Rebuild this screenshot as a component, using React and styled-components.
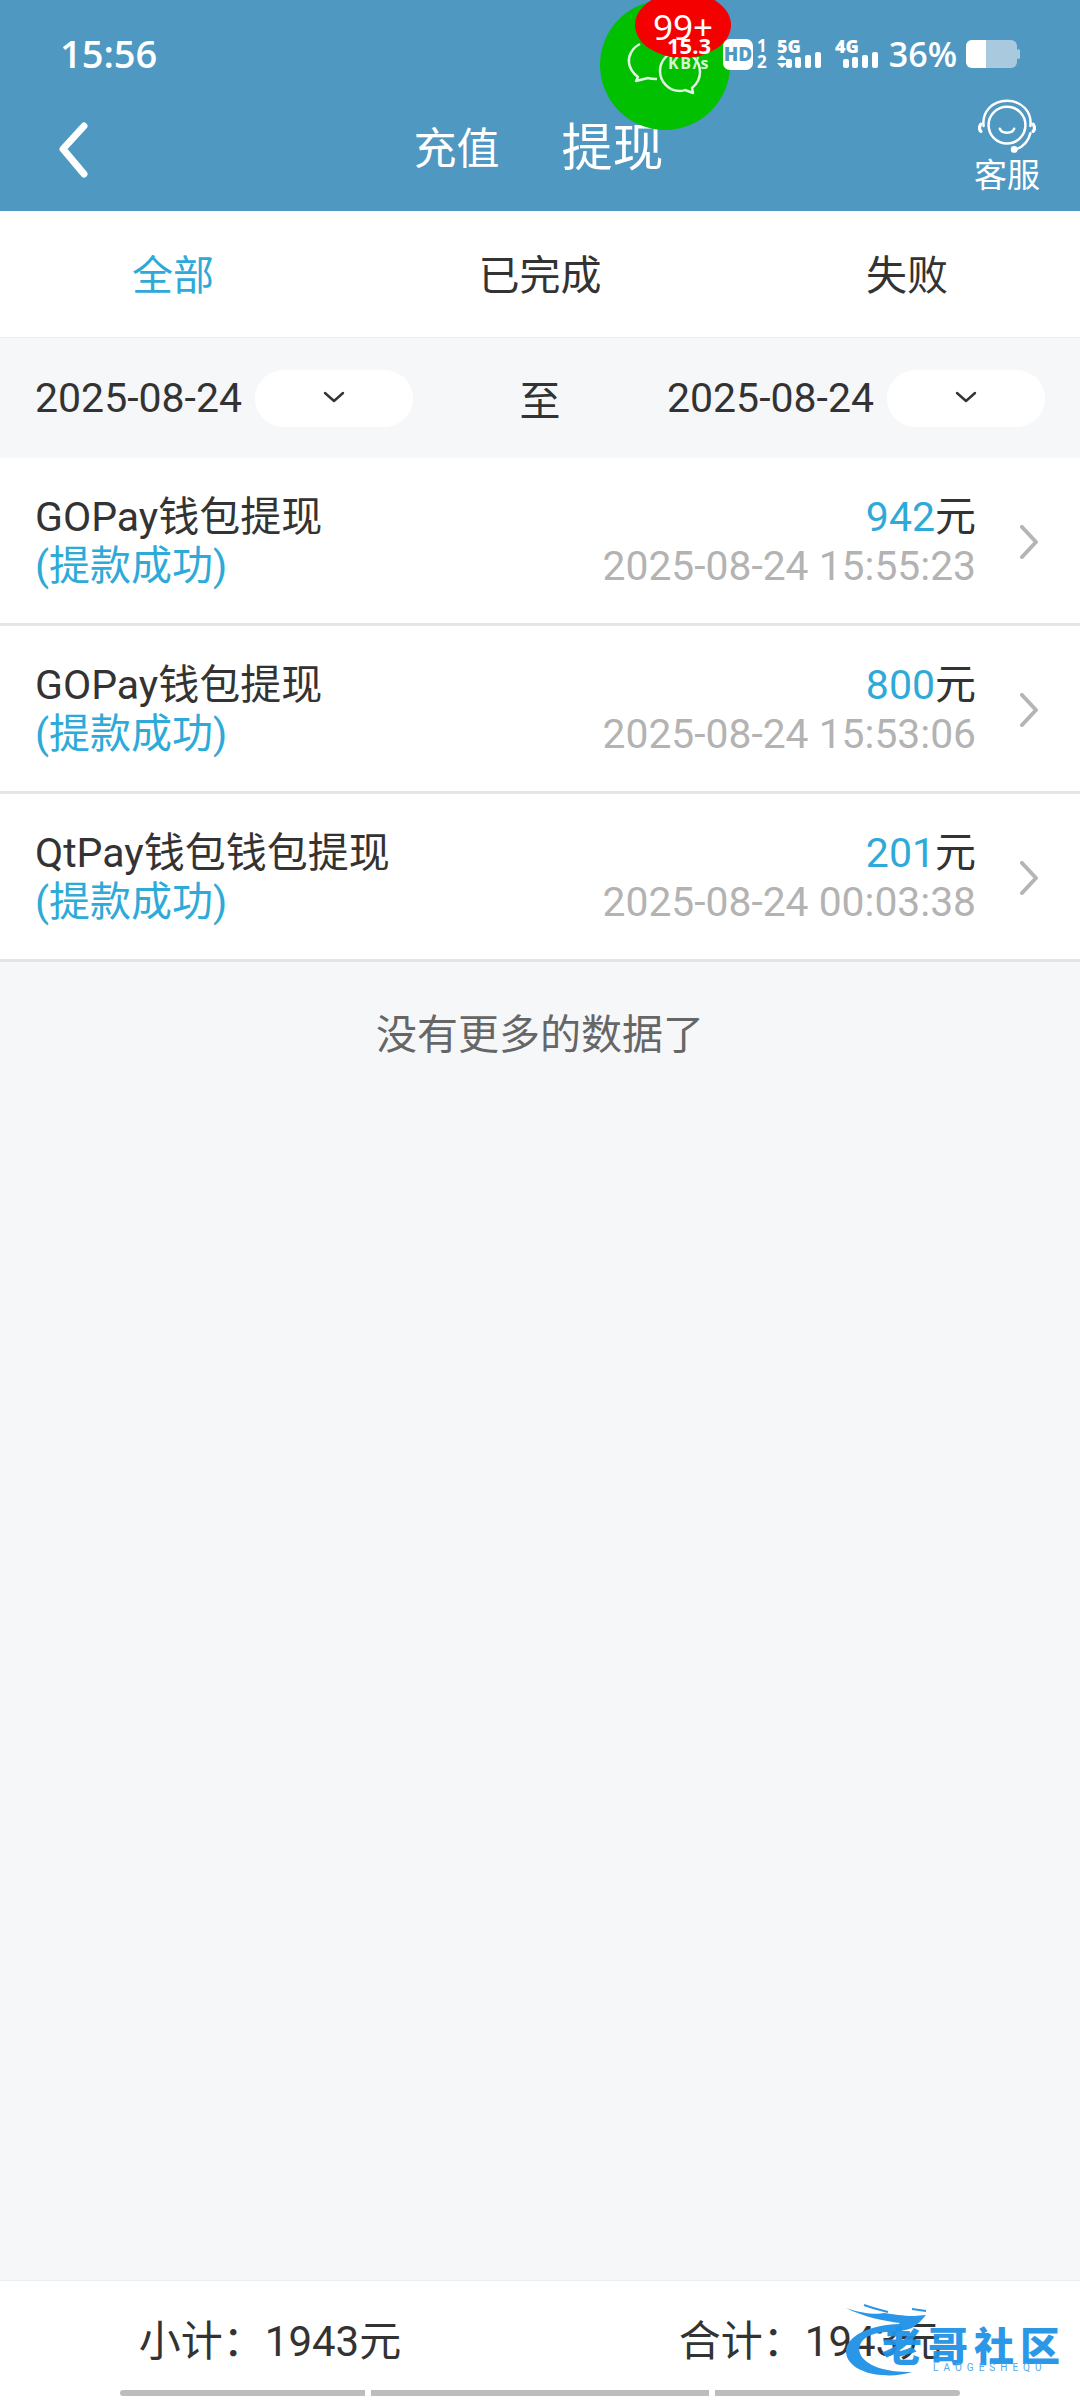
import React from "react";
import styled, { createGlobalStyle } from "styled-components";

const GlobalStyle = createGlobalStyle`
	html, body {
		margin: 0;
		padding: 0;
		background: #f6f7f9;
		font-family: Roboto, "Noto Sans CJK SC", sans-serif;
	}
`;

const Page = styled.div`
	position: relative;
	width: 1080px;
	height: 2400px;
	overflow: hidden;
	display: flex;
	flex-direction: column;
	background: #f6f7f9;
	color: #333;
	font-size: 41px;
`;

const Header = styled.header`
	height: 211px;
	flex: none;
	background: #4f98c1;
	color: #fff;
	display: flex;
	flex-direction: column;
`;

const StatusBar = styled.div`
	height: 107px;
	box-sizing: border-box;
	padding: 0 60px 0 60px;
	display: flex;
	justify-content: space-between;
	align-items: flex-start;
`;

const Clock = styled.span`
	margin-top: 29px;
	font-family: "Open Sans", sans-serif;
	font-size: 38px;
	font-weight: 600;
	line-height: 48px;
`;

// the status icons are drawn above the floating bubble
const StatusIcons = styled.div`
	position: relative;
	z-index: 2;
	display: flex;
	align-items: center;
	height: 36px;
	margin-top: 36px;
`;

const HdBadge = styled.span`
	width: 30px;
	height: 31px;
	border-radius: 7px;
	background: #fff;
	color: #4f98c1;
	font-family: "Open Sans", sans-serif;
	font-size: 19px;
	font-weight: 800;
	line-height: 31px;
	text-align: center;
`;

const SimSlots = styled.span`
	margin-left: 4px;
	display: flex;
	flex-direction: column;
	font-family: "Open Sans", sans-serif;
	font-size: 17px;
	font-weight: 700;
	line-height: 16px;
`;

const SignalIcon = styled.svg`
	margin-left: ${(props) => props.$gap}px;
	overflow: visible;
`;

const Percent = styled.span`
	margin: 0 9px 0 11px;
	font-family: "Open Sans", sans-serif;
	font-size: 34px;
	font-weight: 600;
	line-height: 36px;
`;

const NavBar = styled.nav`
	flex: 1;
	display: grid;
	grid-template-columns: 1fr auto 1fr;
	align-items: center;
	padding: 0 40px 0 59px;
`;

const BackLink = styled.a`
	display: flex;
	margin-top: -19px;
`;

const NavTabs = styled.div`
	display: flex;
	align-items: center;
	gap: 62px;
	margin: -20px 0 0 -22px;
`;

const NavTab = styled.span`
	font-size: ${(props) => (props.$active ? "51px" : "43px")};
	line-height: 60px;
`;

const Service = styled.div`
	justify-self: end;
	display: flex;
	flex-direction: column;
	align-items: center;
	gap: 3px;
	margin-top: -23px;
	font-size: 33px;
	line-height: 40px;
`;

const Tabs = styled.div`
	height: 127px;
	flex: none;
	box-sizing: border-box;
	padding-bottom: 5px;
	background: #fff;
	border-bottom: 1px solid #ececec;
	display: grid;
	grid-template-columns: repeat(3, 367px);
	justify-content: center;
	align-items: center;
	text-align: center;
`;

const Tab = styled.span`
	color: ${(props) => (props.$active ? "#2eaad8" : "#333")};
`;

const Filter = styled.div`
	height: 120px;
	flex: none;
	box-sizing: border-box;
	padding: 0 35px;
	display: flex;
	align-items: center;
	justify-content: space-between;
`;

const DateField = styled.div`
	display: flex;
	align-items: center;
	gap: 13px;
`;

const Pill = styled.div`
	width: 158px;
	height: 57px;
	margin-top: 1px;
	border-radius: 29px;
	background: #fff;
	display: flex;
	align-items: center;
	justify-content: center;
	padding-bottom: 4px;
	box-sizing: border-box;
`;

const List = styled.div`
	background: #fff;
	flex: none;
`;

const Row = styled.div`
	height: 168px;
	box-sizing: border-box;
	padding: 3px 36px 0 35px;
	border-bottom: 3px solid #e4e5e7;
	display: flex;
	align-items: center;
	justify-content: space-between;
	line-height: 49px;
`;

const RowLeft = styled.div`
	display: flex;
	flex-direction: column;
`;

const Status = styled.span`
	color: #2eaad8;
`;

const RowRight = styled.div`
	display: flex;
	align-items: center;
	gap: 44px;
`;

const Amounts = styled.div`
	display: flex;
	flex-direction: column;
	align-items: flex-end;
`;

const Money = styled.span`
	color: #2eaad8;
`;

const Time = styled.span`
	color: #b3b3b3;
	font-size: 40.8px;
`;

const NoMore = styled.div`
	margin-top: 45px;
	line-height: 56px;
	text-align: center;
	color: #666;
`;

const Footer = styled.footer`
	margin-top: auto;
	height: 120px;
	flex: none;
	box-sizing: border-box;
	background: #fff;
	border-top: 1px solid #ececec;
	display: flex;
	flex-direction: column;
`;

const Totals = styled.div`
	flex: 1;
	display: flex;
	align-items: center;
	text-align: center;
	font-size: 42px;
	padding-top: 3px;
`;

const Total = styled.span`
	flex: 1;
`;

const HomeBars = styled.div`
	display: flex;
	justify-content: center;
	gap: 6px;
	height: 6px;
	margin-bottom: 4px;
`;

const HomeBar = styled.span`
	width: ${(props) => props.$width}px;
	background: #bdbdbd;
	border-radius: ${(props) => props.$radius || "0"};
`;

// floating message bubble that sits over the status bar
const Bubble = styled.div`
	position: absolute;
	left: 600px;
	top: 0;
	width: 130px;
	height: 130px;
	border-radius: 50%;
	background: #00c000;
`;

const BubbleBadge = styled.div`
	position: absolute;
	left: 35px;
	top: -8px;
	width: 96px;
	height: 66px;
	border-radius: 50%;
	background: #f40000;
	color: #fff;
	font-size: 35px;
	line-height: 46px;
	font-family: "Noto Sans", sans-serif;
	text-align: center;
	padding-top: 12px;
	box-sizing: border-box;
`;

const BubbleIcon = styled.svg`
	position: absolute;
	left: 26px;
	top: 38px;
`;

const Speed = styled.div`
	position: absolute;
	left: 65px;
	top: 34px;
	width: 48px;
	display: flex;
	flex-direction: column;
	align-items: center;
	color: #fff;
	font-family: "Open Sans", sans-serif;
	font-weight: 700;
	font-size: 22px;
	line-height: 22px;
`;

const SpeedUnit = styled.span`
	font-size: 16px;
	line-height: 14px;
	letter-spacing: 1.5px;
	white-space: nowrap;
	color: #d6f3d6;
`;

// watermark over the footer
const Watermark = styled.div`
	position: absolute;
	left: 842px;
	top: 2303px;
	width: 224px;
	height: 76px;
`;

const DragonIcon = styled.svg`
	position: absolute;
	left: 0;
	top: 0;
`;

const WatermarkTitle = styled.div`
	position: absolute;
	left: 40px;
	top: 16px;
	color: #1f93e6;
	font-family: "Noto Sans CJK SC", sans-serif;
	font-size: 40px;
	font-weight: 900;
	line-height: 50px;
	letter-spacing: 6px;
	white-space: nowrap;
	opacity: 0.95;
`;

const WatermarkSub = styled.div`
	position: absolute;
	left: 91px;
	top: 59px;
	color: #55a9ea;
	font-size: 10px;
	line-height: 12px;
	letter-spacing: 5px;
	white-space: nowrap;
`;

const Signal = ({ label, width, gap, arrows }) => (
	<SignalIcon $gap={gap} width={width} height="36" viewBox={`0 0 ${width} 36`} fill="#fff">
		<text x="0" y="17" fontSize="18" fontWeight="800" fontFamily="Open Sans, sans-serif">{label}</text>
		{arrows && <path d="M5 19l5 5H0zM0 27h10l-5 5z" />}
		<rect x={width - 35} y="23" width="6" height="9" rx="2" />
		<rect x={width - 26} y="21" width="6" height="11" rx="2" />
		<rect x={width - 16} y="19" width="6" height="13" rx="2" />
		<rect x={width - 6} y="16" width="6" height="16" rx="2" />
	</SignalIcon>
);

const Battery = () => (
	<svg width="54" height="28" viewBox="0 0 54 28">
		<rect x="0" y="0" width="51" height="28" rx="6" fill="#a9cade" />
		<path d="M6 0h14v28H6a6 6 0 0 1-6-6V6a6 6 0 0 1 6-6z" fill="#fff" />
		<rect x="51" y="9" width="3" height="10" rx="1.5" fill="#a9cade" />
	</svg>
);

const ChatIcon = () => (
	<BubbleIcon width="80" height="60" viewBox="0 0 80 60" fill="none" stroke="#dff5df" strokeWidth="2.5" strokeLinejoin="round">
		<path d="M14 6C6 10 2 18 3 25c1 7 5 11 9 14l-2 4 12-3c3 1 6 1 9 1" />
		<path d="M54 14c11 0 20 9 20 20 0 7-3 12-8 16l1 5-8-3c-2 1-3 1-5 1-11 0-20-9-20-20s9-20 20-20z" />
	</BubbleIcon>
);

const HeadsetIcon = () => (
	<svg width="58" height="54" viewBox="0 0 64 60" fill="none" stroke="#fff" strokeWidth="2.8" strokeLinecap="round">
		<path d="M6 30C4 14 16 2 32 2s28 12 26 28" />
		<circle cx="32" cy="29" r="20.5" />
		<path d="M3 28c-2 3-2 6 0 8M61 28c2 3 2 6 0 8" strokeWidth="3.6" />
		<path d="M24 33c2 6 14 6 16 0" />
		<path d="M58 38c-2 8-8 15-16 18" />
		<circle cx="40" cy="56" r="2.4" fill="#fff" />
	</svg>
);

const BackIcon = () => (
	<svg width="30" height="56" viewBox="0 0 30 56" fill="none" stroke="#fff" strokeWidth="7" strokeLinecap="round" strokeLinejoin="round">
		<path d="M25 4L4 27l21 25" />
	</svg>
);

const RowArrow = () => (
	<svg width="18" height="34" viewBox="0 0 18 34" fill="none" stroke="#b5b5b5" strokeWidth="4" strokeLinecap="round" strokeLinejoin="round" style={{ marginRight: 6 }}>
		<path d="M2 2l14 15L2 32" />
	</svg>
);

const PillArrow = () => (
	<svg width="22" height="12" viewBox="0 0 22 12" fill="none" stroke="#333" strokeWidth="2.4" strokeLinecap="round" strokeLinejoin="round">
		<path d="M2 2l9 8 9-8" />
	</svg>
);

const DragonMark = () => (
	<DragonIcon width="130" height="76" viewBox="0 0 130 76">
		<path d="M58 21C26 22 6 33 4 47c-1 14 16 24 36 25 10 1 20 0 30-3-12 0-27-1-38-6C21 58 15 50 18 42c4-10 18-14 38-13z" fill="#2a96e8" />
		<path d="M4 5c14 5 30 7 38 5 10 1 18 3 30 3l12-1c-4 5-8 9-14 13-8 3-16 4-24 3l12-8C42 18 22 14 4 5z" fill="#2a96e8" />
		<path d="M22 2c8 3 16 5 24 7M70 6l14 2" stroke="#2a96e8" strokeWidth="2" fill="none" />
	</DragonIcon>
);

const records = [
	{ name: "GOPay钱包提现", amount: 942, time: "2025-08-24 15:55:23" },
	{ name: "GOPay钱包提现", amount: 800, time: "2025-08-24 15:53:06" },
	{ name: "QtPay钱包钱包提现", amount: 201, time: "2025-08-24 00:03:38" },
];

const App = () => {
	return (
		<Page>
			<GlobalStyle />
			<Header>
				<StatusBar>
					<Clock>15:56</Clock>
					<StatusIcons>
						<HdBadge>HD</HdBadge>
						<SimSlots><span>1</span><span>2</span></SimSlots>
						<Signal label="5G" width={44} gap={10} arrows />
						<Signal label="4G" width={43} gap={14} />
						<Percent>36%</Percent>
						<Battery />
					</StatusIcons>
				</StatusBar>
				<NavBar>
					<BackLink><BackIcon /></BackLink>
					<NavTabs>
						<NavTab>充值</NavTab>
						<NavTab $active>提现</NavTab>
					</NavTabs>
					<Service>
						<HeadsetIcon />
						客服
					</Service>
				</NavBar>
			</Header>

			<Tabs>
				<Tab $active>全部</Tab>
				<Tab>已完成</Tab>
				<Tab>失败</Tab>
			</Tabs>

			<Filter>
				<DateField>
					2025-08-24
					<Pill><PillArrow /></Pill>
				</DateField>
				<span>至</span>
				<DateField>
					2025-08-24
					<Pill><PillArrow /></Pill>
				</DateField>
			</Filter>

			<List>
				{records.map((item) => (
					<Row key={item.time}>
						<RowLeft>
							<span>{item.name}</span>
							<Status>(提款成功)</Status>
						</RowLeft>
						<RowRight>
							<Amounts>
								<span><Money>{item.amount}</Money>元</span>
								<Time>{item.time}</Time>
							</Amounts>
							<RowArrow />
						</RowRight>
					</Row>
				))}
			</List>

			<NoMore>没有更多的数据了</NoMore>

			<Footer>
				<Totals>
					<Total>小计：1943元</Total>
					<Total>合计：1943元</Total>
				</Totals>
				<HomeBars>
					<HomeBar $width={245} $radius="3px 0 0 3px" />
					<HomeBar $width={338} />
					<HomeBar $width={245} $radius="0 3px 3px 0" />
				</HomeBars>
			</Footer>

			<Bubble>
				<ChatIcon />
				<BubbleBadge>99+</BubbleBadge>
				<Speed>
					15.3
					<SpeedUnit>KB/s</SpeedUnit>
				</Speed>
			</Bubble>

			<Watermark>
				<DragonMark />
				<WatermarkTitle>老哥社区</WatermarkTitle>
				<WatermarkSub>LAOGESHEQU</WatermarkSub>
			</Watermark>
		</Page>
	);
};

export default App;
